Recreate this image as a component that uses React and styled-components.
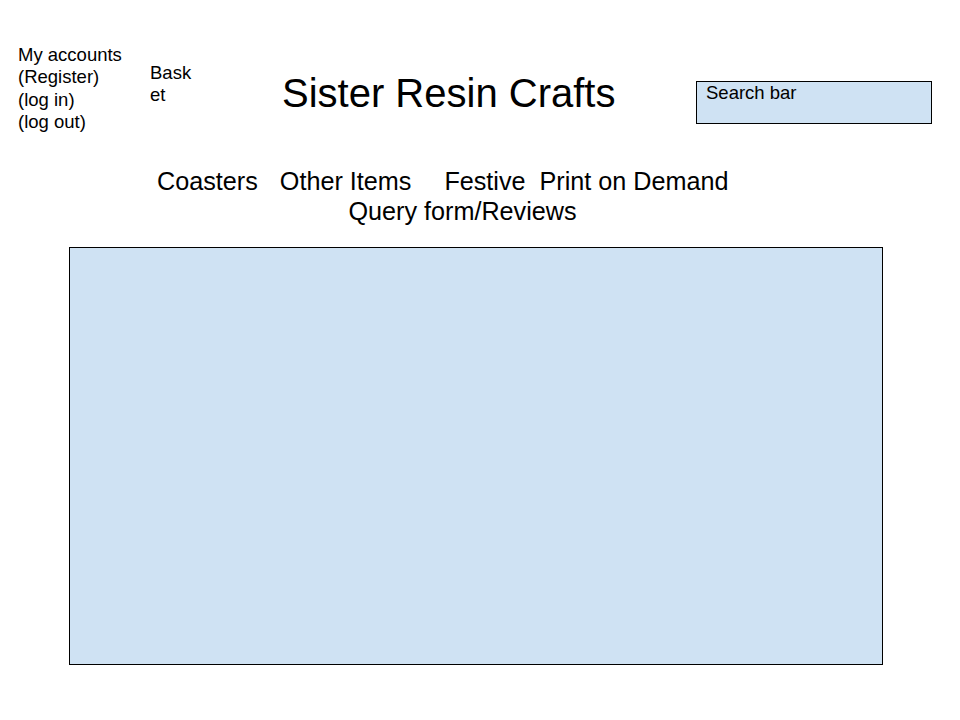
import React from "react";
import styled, { createGlobalStyle } from "styled-components";

const GlobalStyle = createGlobalStyle`
  body {
    margin: 0;
    background: #ffffff;
    font-family: "Liberation Sans", Arial, sans-serif;
    color: #000000;
  }
`;

const Page = styled.div`
  width: 960px;
  height: 720px;
  background: #ffffff;
`;

// Top row: account links, basket, shop title, search
const Header = styled.header`
  display: grid;
  grid-template-columns: 132px 132px 414px 236px;
  align-items: start;
  height: 124px;
  padding-left: 18px;
`;

const AccountLinks = styled.div`
  margin-top: 44px;
  font-size: 18.5px;
  line-height: 22.3px;
`;

const Basket = styled.div`
  margin-top: 62px;
  width: 46px;
  font-size: 18.5px;
  line-height: 22.3px;
  word-break: break-all;
`;

const Title = styled.h1`
  margin: 70px 0 0;
  font-size: 40px;
  font-weight: normal;
  line-height: 46px;
  white-space: nowrap;
`;

const SearchBox = styled.div`
  box-sizing: border-box;
  margin-top: 81px;
  height: 43px;
  padding: 0 9px;
  border: 1px solid #000000;
  background: #cfe2f3;
  font-size: 18.5px;
  line-height: 22px;
`;

// Category links
const Nav = styled.nav`
  margin: 42px 0 0 157px;
  width: 611px;
  font-size: 25.2px;
  line-height: 30px;
`;

const NavRow = styled.div`
  display: flex;
  white-space: nowrap;
`;

const NavItem = styled.span`
  margin-left: ${(p) => p.$gap || 0}px;
`;

const NavLine = styled.div`
  text-align: center;
`;

const Showcase = styled.main`
  box-sizing: border-box;
  margin: 21px 0 0 69px;
  width: 814px;
  height: 418px;
  border: 1px solid #000000;
  background: #cfe2f3;
`;

export default function App() {
  return (
    <Page>
      <GlobalStyle />
      <Header>
        <AccountLinks>
          <div>My accounts</div>
          <div>(Register)</div>
          <div>(log in)</div>
          <div>(log out)</div>
        </AccountLinks>
        <Basket>Basket</Basket>
        <Title>Sister Resin Crafts</Title>
        <SearchBox>Search bar</SearchBox>
      </Header>

      <Nav>
        <NavRow>
          <NavItem>Coasters</NavItem>
          <NavItem $gap={22}>Other Items</NavItem>
          <NavItem $gap={33}>Festive</NavItem>
          <NavItem $gap={14}>Print on Demand</NavItem>
        </NavRow>
        <NavLine>Query form/Reviews</NavLine>
      </Nav>

      <Showcase />
    </Page>
  );
}
